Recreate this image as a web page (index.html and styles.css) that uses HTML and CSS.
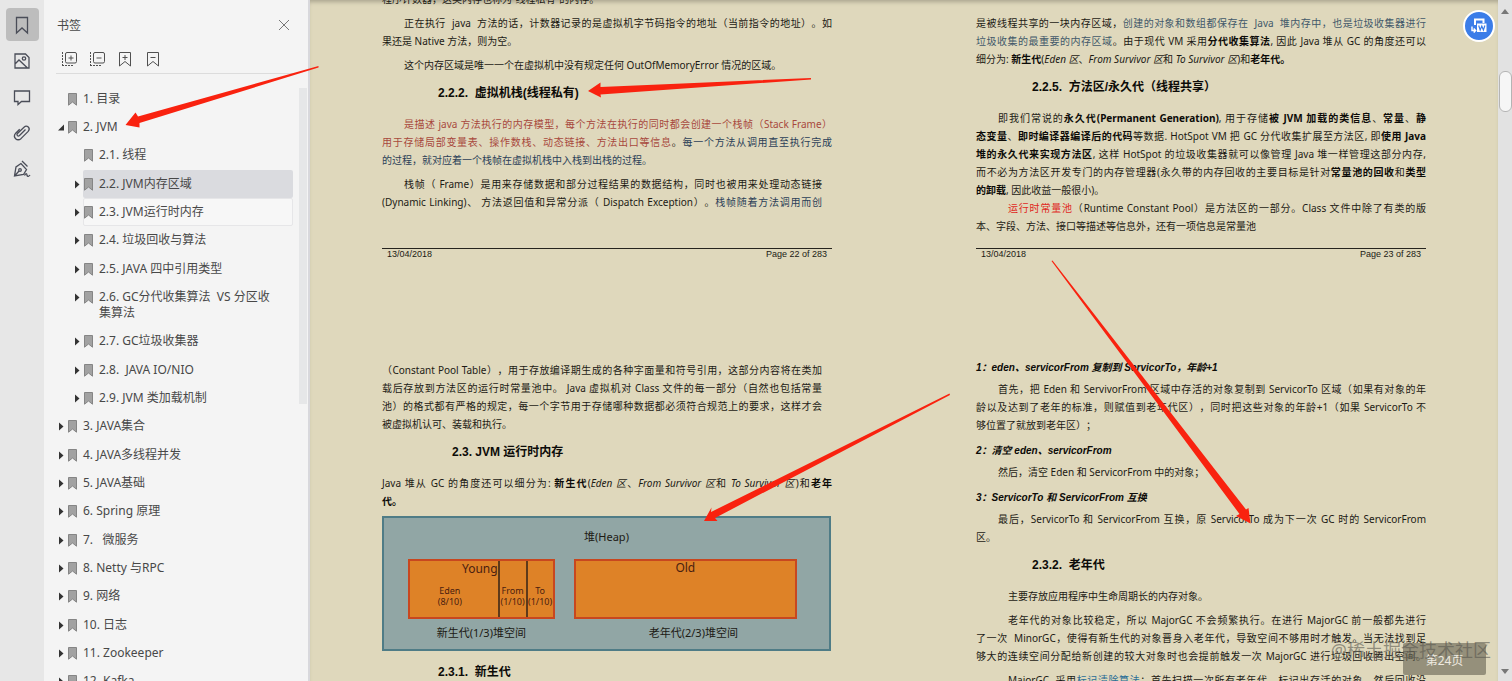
FILE: index.html
```html
<!DOCTYPE html>
<html lang="zh-CN">
<head>
  <meta charset="UTF-8" />
  <meta name="viewport" content="width=device-width, initial-scale=1.0" />
  <title>JVM</title>
  <link rel="stylesheet" href="styles.css">
</head>
<body>
  <svg width="0" height="0" class="defs" aria-hidden="true">
    <symbol id="mark" viewBox="0 0 9 13"><path d="M.5 .5h8v11.700l-4-3.200-4 3.200z" fill="#a2a2a2" stroke="#858585"/></symbol>
    <symbol id="closed" viewBox="0 0 6 9"><path d="M1 .5l4.500 4-4.500 4z" fill="#333"/></symbol>
    <symbol id="open" viewBox="0 0 6 9"><path d="M6 1.500v6H0z" fill="#333"/></symbol>
  </svg>

  <div class="app">
    <nav class="rail">
      <button class="active" aria-label="书签"><svg width="20" height="20" viewBox="0 0 20 20"><path d="M4.500 2.500h11v15.500l-5.500-5-5.500 5z"/></svg></button>
      <button aria-label="缩略图"><svg width="20" height="20" viewBox="0 0 20 20"><path d="M3 3h10.500l3.500 3.500v10.500h-14zM3 13l4-4 8.500 8"/><circle cx="12" cy="7.500" r="1.700"/></svg></button>
      <button aria-label="批注"><svg width="20" height="20" viewBox="0 0 20 20"><path d="M2.500 4h15v10.500h-8l-3.500 3v-3h-3.500z"/></svg></button>
      <button aria-label="附件"><svg width="20" height="20" viewBox="0 0 20 20"><path d="M13.500 6.500l-6 6c-1.500 1.500-3.500-.5-2-2l6.500-6.300c3-2.700 7 1 4.200 4.200l-7 7c-4 3.500-9-1-5.500-5.200l4-4"/></svg></button>
      <button aria-label="签名"><svg width="20" height="20" viewBox="0 0 20 20"><path d="M10 2l5.500 5.500M9 4.500l-5 3.500-1.500 9 9-1.500 3-5zM3 16.500l4-4.500M12.500 16.500c1.500-2.500 2.500-2.500 2.500 0 .5 1.500 2 1 3-.5"/><circle cx="8" cy="11" r="1.300"/></svg></button>
    </nav>

    <aside class="panel">
      <header class="panel-head">
        <h1>书签</h1>
        <button aria-label="关闭"><svg width="12" height="12" viewBox="0 0 12 12"><path d="M1 1l10 10M11 1L1 11"/></svg></button>
      </header>
      <div class="tools">
        <button aria-label="展开"><svg width="16" height="16" viewBox="0 0 16 16"><rect x="4.500" y="1.500" width="11" height="10.500" rx="1.500"/><path d="M10 4.500v5M7.500 7h5"/><path class="dots" d="M1.500 1v14M1 14.500h12"/></svg></button>
        <button aria-label="收起"><svg width="16" height="16" viewBox="0 0 16 16"><rect x="4.500" y="1.500" width="11" height="10.500" rx="1.500"/><path d="M7.500 7h5"/><path class="dots" d="M1.500 1v14M1 14.500h12"/></svg></button>
        <button aria-label="添加书签"><svg width="16" height="16" viewBox="0 0 16 16"><path d="M2.500 1.500h11v13.500l-5.500-4.500-5.500 4.500zM8 4v5M5.500 6.500h5"/></svg></button>
        <button aria-label="删除书签"><svg width="16" height="16" viewBox="0 0 16 16"><path d="M2.500 1.500h11v13.500l-5.500-4.500-5.500 4.500zM5.500 6.500h5"/></svg></button>
      </div>
      <div class="tree-wrap">
        <ul class="tree">
          <li><i></i><a href="#"><svg><use href="#mark"/></svg><span>1. 目录</span></a></li>
          <li><svg class="arrow"><use href="#open"/></svg><a href="#"><svg><use href="#mark"/></svg><span>2. JVM</span></a></li>
          <li class="sub"><i></i><a href="#"><svg><use href="#mark"/></svg><span>2.1. 线程</span></a></li>
          <li class="sub"><svg class="arrow"><use href="#closed"/></svg><a href="#" class="selected"><svg><use href="#mark"/></svg><span>2.2. JVM内存区域</span></a></li>
          <li class="sub"><svg class="arrow"><use href="#closed"/></svg><a href="#" class="hover"><svg><use href="#mark"/></svg><span>2.3. JVM运行时内存</span></a></li>
          <li class="sub"><svg class="arrow"><use href="#closed"/></svg><a href="#"><svg><use href="#mark"/></svg><span>2.4. 垃圾回收与算法</span></a></li>
          <li class="sub"><svg class="arrow"><use href="#closed"/></svg><a href="#"><svg><use href="#mark"/></svg><span>2.5. JAVA 四中引用类型</span></a></li>
          <li class="sub"><svg class="arrow"><use href="#closed"/></svg><a href="#"><svg><use href="#mark"/></svg><span>2.6. GC分代收集算法&nbsp; VS 分区收<br>集算法</span></a></li>
          <li class="sub"><svg class="arrow"><use href="#closed"/></svg><a href="#"><svg><use href="#mark"/></svg><span>2.7. GC垃圾收集器</span></a></li>
          <li class="sub"><svg class="arrow"><use href="#closed"/></svg><a href="#"><svg><use href="#mark"/></svg><span>2.8.&nbsp; JAVA IO/NIO</span></a></li>
          <li class="sub"><svg class="arrow"><use href="#closed"/></svg><a href="#"><svg><use href="#mark"/></svg><span>2.9. JVM 类加载机制</span></a></li>
          <li><svg class="arrow"><use href="#closed"/></svg><a href="#"><svg><use href="#mark"/></svg><span>3. JAVA集合</span></a></li>
          <li><svg class="arrow"><use href="#closed"/></svg><a href="#"><svg><use href="#mark"/></svg><span>4. JAVA多线程并发</span></a></li>
          <li><svg class="arrow"><use href="#closed"/></svg><a href="#"><svg><use href="#mark"/></svg><span>5. JAVA基础</span></a></li>
          <li><svg class="arrow"><use href="#closed"/></svg><a href="#"><svg><use href="#mark"/></svg><span>6. Spring 原理</span></a></li>
          <li><svg class="arrow"><use href="#closed"/></svg><a href="#"><svg><use href="#mark"/></svg><span>7. &nbsp; 微服务</span></a></li>
          <li><svg class="arrow"><use href="#closed"/></svg><a href="#"><svg><use href="#mark"/></svg><span>8. Netty 与RPC</span></a></li>
          <li><svg class="arrow"><use href="#closed"/></svg><a href="#"><svg><use href="#mark"/></svg><span>9. 网络</span></a></li>
          <li><svg class="arrow"><use href="#closed"/></svg><a href="#"><svg><use href="#mark"/></svg><span>10. 日志</span></a></li>
          <li><svg class="arrow"><use href="#closed"/></svg><a href="#"><svg><use href="#mark"/></svg><span>11. Zookeeper</span></a></li>
          <li><svg class="arrow"><use href="#closed"/></svg><a href="#"><svg><use href="#mark"/></svg><span>12. Kafka</span></a></li>
        </ul>
        <div class="tree-thumb"></div>
      </div>
    </aside>

    <main class="viewer">
      <div class="pages">
        <section class="page">
          <p><span class="end">程序计数器，这类内存也称为“线程私有”的内存。</span></p>
          <p class="indent">正在执行&nbsp; java&nbsp; 方法的话，计数器记录的是虚拟机字节码指令的地址（当前指令的地址）。如<span class="end">果还是 Native 方法，则为空。</span></p>
          <p class="indent single">这个内存区域是唯一一个在虚拟机中没有规定任何 OutOfMemoryError 情况的区域。</p>
          <h3>2.2.2.&nbsp; 虚拟机栈(线程私有)</h3>
          <p class="indent"><span class="brick">是描述 java 方法执行的内存模型，每个方法在执行的同时都会创建一个栈帧（Stack Frame）<br>用于存储局部变量表、操作数栈、动态链接、方法出口等信息</span>。<span class="navy">每一个方法从调用直至执行完成<span class="end">的过程，就对应着一个栈帧在虚拟机栈中入栈到出栈的过程。</span></span></p>
          <p class="indent ragged">栈帧（ Frame）是用来存储数据和部分过程结果的数据结构，同时也被用来处理动态链接<br>(Dynamic Linking)、 方法返回值和异常分派（ Dispatch Exception）。<span class="navy">栈帧随着方法调用而创</span></p>
          <footer><span>13/04/2018</span><span>Page 22 of 283</span></footer>
        </section>

        <section class="page next">
          <p>是被线程共享的一块内存区域，<span class="steel">创建的对象和数组都保存在&nbsp; Java&nbsp; 堆内存中，也是垃圾收集器进行<br>垃圾收集的最重要的内存区域</span>。由于现代 VM 采用<b>分代收集算法</b>, 因此 Java 堆从 GC 的角度还可以<span class="end">细分为: <b>新生代</b>(<em>Eden 区</em>、<em>From Survivor 区</em>和 <em>To Survivor 区</em>)和<b>老年代。</b></span></p>
          <h3>2.2.5.&nbsp; 方法区/永久代（线程共享）</h3>
          <p class="indent joined">即我们常说的<b>永久代(Permanent Generation)</b>, 用于存储<b>被 JVM 加载的类信息</b>、<b>常量</b>、<b>静<br>态变量</b>、<b>即时编译器编译后的代码</b>等数据. HotSpot VM 把 GC 分代收集扩展至方法区, 即<b>使用 Java<br>堆的永久代来实现方法区</b>, 这样 HotSpot 的垃圾收集器就可以像管理 Java 堆一样管理这部分内存,<br>而不必为方法区开发专门的内存管理器(永久带的内存回收的主要目标是针对<b>常量池的回收</b>和<b>类型</b><span class="end"><b>的卸载</b>, 因此收益一般很小)。</span></p>
          <p class="indent-more"><span class="red">运行时常量池</span>（Runtime Constant Pool）是方法区的一部分。Class 文件中除了有类的版<span class="end">本、字段、方法、接口等描述等信息外，还有一项信息是常量池</span></p>
          <footer><span>13/04/2018</span><span>Page 23 of 283</span></footer>
        </section>

        <section class="page lower">
          <p class="ragged">（Constant Pool Table），用于存放编译期生成的各种字面量和符号引用，这部分内容将在类加<br>载后存放到方法区的运行时常量池中。 Java 虚拟机对 Class 文件的每一部分（自然也包括常量<br>池）的格式都有严格的规定，每一个字节用于存储哪种数据都必须符合规范上的要求，这样才会<span class="end">被虚拟机认可、装载和执行。</span></p>
          <h2>2.3. JVM 运行时内存</h2>
          <p>Java 堆从 GC 的角度还可以细分为: <b>新生代</b>(<em>Eden 区</em>、<em>From Survivor 区</em>和 <em>To Survivor 区</em>)和<b>老年</b><span class="end"><b>代。</b></span></p>
          <figure class="heap">
            <figcaption>堆(Heap)</figcaption>
            <div class="spaces">
              <div class="young">
                <div class="cells">
                  <div class="eden"><strong>Young</strong><small>Eden<br>(8/10)</small></div>
                  <div><small>From<br>(1/10)</small></div>
                  <div><small>To<br>(1/10)</small></div>
                </div>
                <span>新生代(1/3)堆空间</span>
              </div>
              <div class="old">
                <div class="cells"><strong>Old</strong></div>
                <span>老年代(2/3)堆空间</span>
              </div>
            </div>
          </figure>
          <h3>2.3.1.&nbsp; 新生代</h3>
        </section>

        <section class="page lower">
          <h4>1：eden、servicorFrom 复制到 ServicorTo，年龄+1</h4>
          <p class="indent">首先，把 Eden 和 ServivorFrom 区域中存活的对象复制到 ServicorTo 区域（如果有对象的年<br>龄以及达到了老年的标准，则赋值到老年代区），同时把这些对象的年龄+1（如果 ServicorTo 不<span class="end">够位置了就放到老年区）；</span></p>
          <h4>2：清空 eden、servicorFrom</h4>
          <p class="indent single">然后，清空 Eden 和 ServicorFrom 中的对象；</p>
          <h4>3：ServicorTo 和 ServicorFrom 互换</h4>
          <p class="indent">最后，ServicorTo 和 ServicorFrom 互换，原 ServicorTo 成为下一次 GC 时的 ServicorFrom<span class="end">区。</span></p>
          <h3>2.3.2.&nbsp; 老年代</h3>
          <p class="indent-more single">主要存放应用程序中生命周期长的内存对象。</p>
          <p class="indent-more">老年代的对象比较稳定，所以 MajorGC 不会频繁执行。在进行 MajorGC 前一般都先进行<br>了一次&nbsp; MinorGC，使得有新生代的对象晋身入老年代，导致空间不够用时才触发。当无法找到足<br>够大的连续空间分配给新创建的较大对象时也会提前触发一次 MajorGC 进行垃圾回收腾出空间。</p>
          <p class="indent-more">MajorGC&nbsp; 采用<a href="#">标记清除算法</a>：首先扫描一次所有老年代，标记出存活的对象，然后回收没</p>
        </section>
      </div>
      <button class="convert" aria-label="转换"><svg width="18" height="18" viewBox="0 0 18 18"><path d="M5 8V2.500h8.500V6" fill="none" stroke="#fff" stroke-width="2"/><path d="M7 6.500h9.500v8.500H7z" fill="#fff"/><path d="M8.700 8.500l1.500 4.500 1.600-4 1.600 4 1.500-4.500" fill="none" stroke="#3b7de8" stroke-width="1.200"/><path d="M2 9.500v4h3M3.700 11.500l2 2-2 2" fill="none" stroke="#fff" stroke-width="1.400"/></svg></button>
      <div class="page-badge">第24页</div>
      <div class="watermark">@稀土掘金技术社区</div>
    </main>

    <div class="scrollbar">
      <svg width="8" height="5" viewBox="0 0 8 5"><path d="M4 0l4 5H0z"/></svg>
      <div class="thumb"></div>
      <svg class="down" width="8" height="5" viewBox="0 0 8 5"><path d="M0 0h8L4 5z"/></svg>
    </div>
  </div>

  <svg class="notes" aria-hidden="true">
    <path d="M318.500 66L138 116.500 135.500 112.500 125.500 125 139.500 127.500 139.500 123 318.500 67.500z"/>
    <path d="M811 78L600.500 87 600.500 82.500 588 91 601 97.500 600.500 94.500 811 79.500z"/>
    <path d="M949.500 393.500L711 512 711.500 507.500 704 521 717.500 521 715 518 950 395z"/>
    <path d="M1052.500 260.500L1246 509.500 1248.500 508 1250.500 523.500 1236 516 1239.500 514 1051.500 261z"/>
  </svg>
</body>
</html>
```
FILE: styles.css
```css
* {
  box-sizing: border-box;
}
body {
  margin: 0;
  font-family: "Noto Sans", "Noto Sans CJK SC", sans-serif;
  font-size: 10px;
  color: #1c1a14;
  background: #dfd8bc;
  text-spacing-trim: space-all;
  overflow: hidden;
}
button {
  padding: 0;
  border: none;
  background: none;
  cursor: pointer;
}
a {
  color: inherit;
  text-decoration: none;
}
.defs {
  position: absolute;
}
.app {
  display: flex;
  height: 100vh;
  overflow: hidden;
}

/* left icon rail */
.rail {
  flex: 0 0 44px;
  display: flex;
  flex-direction: column;
  align-items: center;
  gap: 3px;
  padding-top: 8px;
  background: #e7e7e7;
}
.rail button {
  display: flex;
  align-items: center;
  justify-content: center;
  width: 33px;
  height: 33px;
  border-radius: 4px;
}
.rail .active {
  background: #bdbdbd;
}
.rail svg,
.panel-head svg,
.tools svg {
  display: block;
  fill: none;
  stroke: #505050;
}
.rail svg {
  stroke: #4a4d58;
  stroke-width: 1.3;
}

/* bookmark panel */
.panel {
  flex: 0 0 266px;
  display: flex;
  flex-direction: column;
  background: #f4f4f4;
  border-right: 2px solid #d8d8dc;
  color: #484848;
}
.panel-head {
  display: flex;
  justify-content: space-between;
  align-items: center;
  height: 50px;
  padding: 0 18px 0 13px;
}
.panel-head h1 {
  margin: 0;
  font-size: 12px;
  font-weight: normal;
}
.panel-head svg {
  stroke: #777;
}
.tools {
  display: flex;
  gap: 12px;
  height: 24px;
  margin: 0 10px 10px 12px;
  padding: 1px 5px 0;
  border-bottom: 1px solid #dcdcdc;
}
.tools button {
  height: 16px;
}
.tools .dots {
  stroke-dasharray: 2 1;
}
.tree-wrap {
  display: flex;
  flex: 1;
  overflow: hidden;
}
.tree {
  flex: 1;
  margin: 0;
  padding: 1px 6px 0 14px;
  list-style: none;
  font-size: 12px;
  line-height: 16px;
}
.tree li {
  display: flex;
}
.tree li:nth-child(3n) {
  margin-bottom: 1px;
}
.tree .sub {
  padding-left: 16px;
}
.tree i,
.tree .arrow {
  flex: none;
  width: 6px;
  height: 9px;
  margin: 10px 3px 0 0;
}
.tree a {
  display: flex;
  flex: 1;
  gap: 6px;
  padding: 5px 0;
  border: 1px solid transparent;
  border-radius: 2px;
  white-space: nowrap;
}
.tree a svg {
  width: 9px;
  height: 13px;
  margin-top: 2px;
}
.tree .selected {
  background: #dadbdf;
}
.tree .hover {
  background: #f7f7f7;
  border-color: #e6e6e8;
}
.tree-thumb {
  width: 8px;
  height: 316px;
  margin: 4px 1px 0 0;
  background: #e6e7e8;
}

/* document */
.viewer {
  position: relative;
  flex: 1;
  min-width: 0;
  overflow: hidden;
  background: #dfd8bc;
  box-shadow: inset 0 4px 4px -2px #aaa58f;
}
.pages {
  display: grid;
  grid-template-columns: minmax(0, 1fr) minmax(0, 1fr);
  margin-top: -10px;
}
.page {
  display: flex;
  flex-direction: column;
  padding: 0 72px;
  white-space: nowrap;
}
.page.next {
  padding-top: 24px;
}
.page.lower {
  padding-top: 61px;
}
.page p {
  margin: 0 0 6px;
  line-height: 18px;
  text-align: justify;
  text-align-last: justify;
}
.page .ragged {
  padding-right: 10px;
}
.page .single {
  text-align-last: left;
}
.end {
  display: block;
  text-indent: 0;
  text-align-last: left;
}
.page .joined {
  margin-bottom: 0;
}
.indent {
  text-indent: 22px;
}
.indent-more {
  text-indent: 32px;
}
.page h2,
.page h3 {
  margin: 3px 0 12px;
  padding-left: 56px;
  font: bold 12px/20px "Liberation Sans", "Noto Sans CJK SC", sans-serif;
  color: #0c0b08;
}
.page h2 {
  padding-left: 70px;
}
.page h4 {
  margin: 4px 0 5px;
  font: italic bold 10px/14px "Liberation Sans", "Noto Sans CJK SC", sans-serif;
  color: #0c0b08;
}
.page.lower h4:first-child {
  margin-top: 0;
}
.page b {
  color: #0c0b08;
}
.page footer {
  display: flex;
  justify-content: space-between;
  margin: auto 0 40px;
  padding: 0 5px;
  border-top: 1px solid #26241e;
  font: 9px/11px "Liberation Sans", sans-serif;
}
.page.next footer {
  margin-top: 7px;
}
.brick {
  color: #a8483c;
}
.navy {
  color: #2c3f58;
}
.steel {
  color: #42586a;
}
.red {
  color: #e0281e;
}
.page a {
  color: #2a6d96;
}

/* heap diagram */
.heap {
  height: 135px;
  margin: 0 1px 8px 0;
  padding: 11px 32px 0 24px;
  border: 2px solid #4f7c86;
  background: #91a6a5;
  font-size: 11px;
  line-height: 16px;
  text-align: center;
}
.heap figcaption {
  padding-left: 8px;
}
.spaces {
  display: flex;
  gap: 19px;
  margin-top: 14px;
}
.young {
  flex: 147;
}
.old {
  flex: 224;
}
.old span {
  padding-left: 16px;
}
.cells {
  display: grid;
  height: 60px;
  margin-bottom: 6px;
  border: 2px solid #c8471f;
  background: #de8227;
  color: #4a2010;
}
.young .cells {
  grid-template-columns: 1fr 28px 27px;
}
.young .cells div {
  display: flex;
  flex-direction: column;
  justify-content: flex-end;
  padding-bottom: 10px;
}
.young .cells div + div {
  border-left: 2px solid #5e3a1a;
}
.cells strong {
  font-size: 12px;
  font-weight: normal;
  line-height: 14px;
}
.young strong {
  text-align: right;
  margin-bottom: 9px;
}
.cells small {
  font-size: 9px;
  line-height: 11px;
}
.eden small {
  padding-right: 8px;
}

/* floating things */
.convert {
  position: absolute;
  top: 10px;
  right: 3px;
  display: flex;
  align-items: center;
  justify-content: center;
  width: 32px;
  height: 32px;
  border: 2px solid #fff;
  border-radius: 50%;
  background: #3b7de8;
}
.page-badge {
  position: absolute;
  right: 12px;
  bottom: 6px;
  width: 83px;
  padding-top: 4px;
  border-radius: 2px;
  background: rgba(100, 96, 80, 0.6);
  color: #eeeae0;
  font-size: 12px;
  line-height: 28px;
  text-align: center;
}
.watermark {
  position: absolute;
  right: 7px;
  bottom: 18px;
  color: rgba(90, 88, 80, 0.6);
  font-size: 18px;
  line-height: 26px;
}
.scrollbar {
  flex: 0 0 14px;
  display: flex;
  flex-direction: column;
  align-items: center;
  padding: 9px 0 7px;
  background: #e2e2e2;
}
.scrollbar svg {
  fill: #777;
}
.thumb {
  width: 13px;
  height: 41px;
  margin-top: 57px;
  border: 1px solid #b4b4b4;
  border-radius: 6px;
  background: #f6f6f6;
}
.down {
  margin-top: auto;
}

/* red arrows drawn over the page */
.notes {
  position: absolute;
  top: 0;
  left: 0;
  width: 100%;
  height: 100%;
  fill: #f9220f;
  pointer-events: none;
}
```
